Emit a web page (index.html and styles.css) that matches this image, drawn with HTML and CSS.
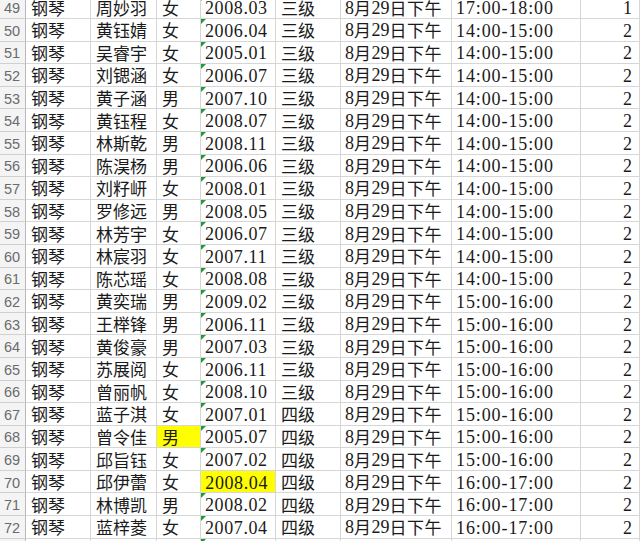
FILE: index.html
```html
<!DOCTYPE html>
<html lang="zh-CN">
<head>
<meta charset="utf-8">
<title>钢琴考级名单</title>
<link rel="stylesheet" href="styles.css">
</head>
<body>
<div class="sheet">
  <div class="row"><div class="rh">49</div><div class="c">钢琴</div><div class="c">周妙羽</div><div class="c">女</div><div class="c n tri">2008.03</div><div class="c">三级</div><div class="c">8<span class="d">月</span>29<span class="d">日下午</span></div><div class="c n">17:00-18:00</div><div class="c n r">1</div></div>
  <div class="row"><div class="rh">50</div><div class="c">钢琴</div><div class="c">黄钰婧</div><div class="c">女</div><div class="c n tri">2006.04</div><div class="c">三级</div><div class="c">8<span class="d">月</span>29<span class="d">日下午</span></div><div class="c n">14:00-15:00</div><div class="c n r">2</div></div>
  <div class="row"><div class="rh">51</div><div class="c">钢琴</div><div class="c">吴睿宇</div><div class="c">女</div><div class="c n tri">2005.01</div><div class="c">三级</div><div class="c">8<span class="d">月</span>29<span class="d">日下午</span></div><div class="c n">14:00-15:00</div><div class="c n r">2</div></div>
  <div class="row"><div class="rh">52</div><div class="c">钢琴</div><div class="c">刘锶涵</div><div class="c">女</div><div class="c n tri">2006.07</div><div class="c">三级</div><div class="c">8<span class="d">月</span>29<span class="d">日下午</span></div><div class="c n">14:00-15:00</div><div class="c n r">2</div></div>
  <div class="row"><div class="rh">53</div><div class="c">钢琴</div><div class="c">黄子涵</div><div class="c">男</div><div class="c n tri">2007.10</div><div class="c">三级</div><div class="c">8<span class="d">月</span>29<span class="d">日下午</span></div><div class="c n">14:00-15:00</div><div class="c n r">2</div></div>
  <div class="row"><div class="rh">54</div><div class="c">钢琴</div><div class="c">黄钰程</div><div class="c">女</div><div class="c n tri">2008.07</div><div class="c">三级</div><div class="c">8<span class="d">月</span>29<span class="d">日下午</span></div><div class="c n">14:00-15:00</div><div class="c n r">2</div></div>
  <div class="row"><div class="rh">55</div><div class="c">钢琴</div><div class="c">林斯乾</div><div class="c">男</div><div class="c n tri">2008.11</div><div class="c">三级</div><div class="c">8<span class="d">月</span>29<span class="d">日下午</span></div><div class="c n">14:00-15:00</div><div class="c n r">2</div></div>
  <div class="row"><div class="rh">56</div><div class="c">钢琴</div><div class="c">陈淏杨</div><div class="c">男</div><div class="c n tri">2006.06</div><div class="c">三级</div><div class="c">8<span class="d">月</span>29<span class="d">日下午</span></div><div class="c n">14:00-15:00</div><div class="c n r">2</div></div>
  <div class="row"><div class="rh">57</div><div class="c">钢琴</div><div class="c">刘籽岍</div><div class="c">女</div><div class="c n tri">2008.01</div><div class="c">三级</div><div class="c">8<span class="d">月</span>29<span class="d">日下午</span></div><div class="c n">14:00-15:00</div><div class="c n r">2</div></div>
  <div class="row"><div class="rh">58</div><div class="c">钢琴</div><div class="c">罗修远</div><div class="c">男</div><div class="c n tri">2008.05</div><div class="c">三级</div><div class="c">8<span class="d">月</span>29<span class="d">日下午</span></div><div class="c n">14:00-15:00</div><div class="c n r">2</div></div>
  <div class="row"><div class="rh">59</div><div class="c">钢琴</div><div class="c">林芳宇</div><div class="c">女</div><div class="c n tri">2006.07</div><div class="c">三级</div><div class="c">8<span class="d">月</span>29<span class="d">日下午</span></div><div class="c n">14:00-15:00</div><div class="c n r">2</div></div>
  <div class="row"><div class="rh">60</div><div class="c">钢琴</div><div class="c">林宸羽</div><div class="c">女</div><div class="c n tri">2007.11</div><div class="c">三级</div><div class="c">8<span class="d">月</span>29<span class="d">日下午</span></div><div class="c n">14:00-15:00</div><div class="c n r">2</div></div>
  <div class="row"><div class="rh">61</div><div class="c">钢琴</div><div class="c">陈芯瑶</div><div class="c">女</div><div class="c n tri">2008.08</div><div class="c">三级</div><div class="c">8<span class="d">月</span>29<span class="d">日下午</span></div><div class="c n">14:00-15:00</div><div class="c n r">2</div></div>
  <div class="row"><div class="rh">62</div><div class="c">钢琴</div><div class="c">黄奕瑞</div><div class="c">男</div><div class="c n tri">2009.02</div><div class="c">三级</div><div class="c">8<span class="d">月</span>29<span class="d">日下午</span></div><div class="c n">15:00-16:00</div><div class="c n r">2</div></div>
  <div class="row"><div class="rh">63</div><div class="c">钢琴</div><div class="c">王榉锋</div><div class="c">男</div><div class="c n tri">2006.11</div><div class="c">三级</div><div class="c">8<span class="d">月</span>29<span class="d">日下午</span></div><div class="c n">15:00-16:00</div><div class="c n r">2</div></div>
  <div class="row"><div class="rh">64</div><div class="c">钢琴</div><div class="c">黄俊豪</div><div class="c">男</div><div class="c n tri">2007.03</div><div class="c">三级</div><div class="c">8<span class="d">月</span>29<span class="d">日下午</span></div><div class="c n">15:00-16:00</div><div class="c n r">2</div></div>
  <div class="row"><div class="rh">65</div><div class="c">钢琴</div><div class="c">苏展阅</div><div class="c">女</div><div class="c n tri">2006.11</div><div class="c">三级</div><div class="c">8<span class="d">月</span>29<span class="d">日下午</span></div><div class="c n">15:00-16:00</div><div class="c n r">2</div></div>
  <div class="row"><div class="rh">66</div><div class="c">钢琴</div><div class="c">曾丽帆</div><div class="c">女</div><div class="c n tri">2008.10</div><div class="c">三级</div><div class="c">8<span class="d">月</span>29<span class="d">日下午</span></div><div class="c n">15:00-16:00</div><div class="c n r">2</div></div>
  <div class="row"><div class="rh">67</div><div class="c">钢琴</div><div class="c">蓝子淇</div><div class="c">女</div><div class="c n tri">2007.01</div><div class="c">四级</div><div class="c">8<span class="d">月</span>29<span class="d">日下午</span></div><div class="c n">15:00-16:00</div><div class="c n r">2</div></div>
  <div class="row"><div class="rh">68</div><div class="c">钢琴</div><div class="c">曾令佳</div><div class="c hl">男</div><div class="c n tri">2005.07</div><div class="c">四级</div><div class="c">8<span class="d">月</span>29<span class="d">日下午</span></div><div class="c n">15:00-16:00</div><div class="c n r">2</div></div>
  <div class="row"><div class="rh">69</div><div class="c">钢琴</div><div class="c">邱旨钰</div><div class="c">女</div><div class="c n tri">2007.02</div><div class="c">四级</div><div class="c">8<span class="d">月</span>29<span class="d">日下午</span></div><div class="c n">15:00-16:00</div><div class="c n r">2</div></div>
  <div class="row"><div class="rh">70</div><div class="c">钢琴</div><div class="c">邱伊蕾</div><div class="c">女</div><div class="c n r hl">2008.04</div><div class="c">四级</div><div class="c">8<span class="d">月</span>29<span class="d">日下午</span></div><div class="c n">16:00-17:00</div><div class="c n r">2</div></div>
  <div class="row"><div class="rh">71</div><div class="c">钢琴</div><div class="c">林博凯</div><div class="c">男</div><div class="c n tri">2008.02</div><div class="c">四级</div><div class="c">8<span class="d">月</span>29<span class="d">日下午</span></div><div class="c n">16:00-17:00</div><div class="c n r">2</div></div>
  <div class="row"><div class="rh">72</div><div class="c">钢琴</div><div class="c">蓝梓菱</div><div class="c">女</div><div class="c n tri">2007.04</div><div class="c">四级</div><div class="c">8<span class="d">月</span>29<span class="d">日下午</span></div><div class="c n">16:00-17:00</div><div class="c n r">2</div></div>
  <div class="row"><div class="rh"></div><div class="c"></div><div class="c"></div><div class="c"></div><div class="c n tri"></div><div class="c"></div><div class="c"></div><div class="c n"></div><div class="c n r"></div></div>
</div>
</body>
</html>
```

FILE: styles.css
```css
html, body {
  margin: 0;
  padding: 0;
  background: #ffffff;
  overflow: hidden;
}

.sheet {
  margin-top: -3.6px;
  width: 640px;
  font-family: "Liberation Serif", "Noto Sans CJK SC", serif;
  font-size: 18px;
  color: #1a1a1a;
}

.row {
  display: grid;
  grid-template-columns: 26px 65px 66px 44px 75px 65px 111px 129px 59px;
  height: 22.6px;
}

.rh,
.c {
  box-sizing: border-box;
  display: flex;
  align-items: center;
  border-bottom: 1px solid #d6d6d6;
  white-space: nowrap;
}

.rh {
  justify-content: flex-start;
  padding: 2px 0 0 4px;
  background: #f4f4f4;
  border-right: 1px solid #b9b9b9;
  border-bottom-color: #d0d0d0;
  font-family: "Liberation Sans", "Noto Sans", sans-serif;
  font-size: 14.5px;
  line-height: 16px;
  color: #6b6b6b;
}

.c {
  position: relative;
  padding: 1px 0 0 5px;
  border-right: 1px solid #d6d6d6;
  font-family: "Noto Sans CJK SC", sans-serif;
  font-size: 17px;
  line-height: 18px;
}

.c.n,
.c:nth-child(7) {
  font-family: "Liberation Serif", "Noto Sans CJK SC", serif;
  font-size: 18px;
  padding-left: 4px;
}

.c.n {
  padding-top: 2px;
}

.c:nth-child(5) {
  letter-spacing: 0.6px;
}

.c:nth-child(8) {
  letter-spacing: 0.9px;
}

.d {
  font-family: "Noto Sans CJK SC", sans-serif;
  font-size: 17px;
  letter-spacing: 0.5px;
}

.c.r {
  justify-content: flex-end;
  padding-right: 7px;
}

.hl {
  background: #ffff00;
}

.tri::before {
  content: "";
  position: absolute;
  left: 0;
  top: 0;
  border-top: 5px solid #1f9a3a;
  border-right: 5px solid transparent;
}
```
